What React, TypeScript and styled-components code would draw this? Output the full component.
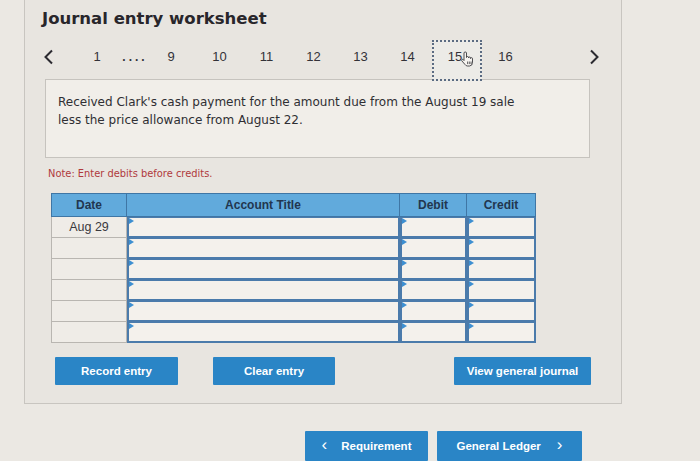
import React from "react";
import styled, { createGlobalStyle } from "styled-components";

const GlobalStyle = createGlobalStyle`
  html, body {
    margin: 0;
    padding: 0;
    background: #ebe8e3;
    width: 700px;
    height: 461px;
    overflow: hidden;
  }
`;

const navItems: { label: string; width: number; gap?: number }[] = [
  { label: "1", width: 34, gap: 22 },
  { label: "....", width: 42 },
  { label: "9", width: 30 },
  { label: "10", width: 47, gap: 10 },
  { label: "11", width: 47 },
  { label: "12", width: 47 },
  { label: "13", width: 47 },
  { label: "14", width: 47 },
];

const ROWS = 6;

const HandCursor: React.FC = () => (
  <svg width="14" height="16" viewBox="0 0 14 16">
    <path
      d="M4 2Q4 1 5.25 1Q6.5 1 6.5 2V6.5Q6.5 5.5 7.5 5.5Q8.5 5.5 8.5 6.5V7Q8.5 6 9.5 6Q10.5 6 10.5 7V7.5Q10.5 6.7 11.5 6.7Q12.5 6.7 12.5 7.7V11Q12.5 15 9.5 15H7.5Q6 15 5 13.5L1.8 9.8Q1.2 9 2 8.5Q2.8 8 3.5 8.8L4 9.5Z"
      fill="#f6f4f0"
      stroke="#3a3a3e"
      strokeWidth="0.9"
      strokeLinejoin="round"
    />
    <path d="M7.6 10.5v2.6M9.3 10.5v2.6M11 10.5v2.6" stroke="#3a3a3e" strokeWidth="0.8" />
  </svg>
);

const Chevron: React.FC<{ dir: "left" | "right" }> = ({ dir }) => (
  <svg width="11" height="16" viewBox="0 0 11 16">
    <polyline
      points={dir === "left" ? "9,1.5 2.5,8 9,14.5" : "2,1.5 8.5,8 2,14.5"}
      fill="none"
      stroke="#2b2a30"
      strokeWidth="2"
    />
  </svg>
);

const App: React.FC = () => {
  return (
    <Page>
      <GlobalStyle />
      <Panel>
        <Title>Journal entry worksheet</Title>
        <Nav>
          <NavArrow>
            <Chevron dir="left" />
          </NavArrow>
          {navItems.map((item) => (
            <NavCell key={item.label} $width={item.width} $gap={item.gap ?? 0}>
              {item.label === "...." ? <Dots>....</Dots> : item.label}
            </NavCell>
          ))}
          <ActivePage>
            <span>15</span>
            <HandCursor />
          </ActivePage>
          <NavCell $width={47} $gap={0}>
            16
          </NavCell>
          <NavArrow $right>
            <Chevron dir="right" />
          </NavArrow>
        </Nav>
        <Description>
          Received Clark's cash payment for the amount due from the August 19 sale
          <br />
          less the price allowance from August 22.
        </Description>
        <Note>Note: Enter debits before credits.</Note>
        <JournalTable>
          <HeadCell>Date</HeadCell>
          <HeadCell>Account Title</HeadCell>
          <HeadCell>Debit</HeadCell>
          <HeadCell>Credit</HeadCell>
          {Array.from({ length: ROWS }).map((_, i) => (
            <React.Fragment key={i}>
              <DateCell>{i === 0 ? "Aug 29" : ""}</DateCell>
              <InputCell />
              <InputCell />
              <InputCell />
            </React.Fragment>
          ))}
        </JournalTable>
        <Actions>
          <ActionButton $width={123}>Record entry</ActionButton>
          <ActionButton $width={122}>Clear entry</ActionButton>
          <Spacer />
          <ActionButton $width={137}>View general journal</ActionButton>
        </Actions>
      </Panel>
      <Footer>
        <ActionButton $width={123} $height={30}>
          <ButtonChevron>‹</ButtonChevron>Requirement
        </ActionButton>
        <ActionButton $width={145} $height={30}>
          General Ledger<ButtonChevron $after>›</ButtonChevron>
        </ActionButton>
      </Footer>
    </Page>
  );
};
export default App;

const Page = styled.div`
  width: 700px;
  height: 461px;
  display: flex;
  flex-direction: column;
  font-family: "Liberation Sans", Arial, sans-serif;
  color: #2f2e33;
`;
const Panel = styled.div`
  margin-left: 24px;
  width: 598px;
  height: 405px;
  box-sizing: border-box;
  border: 1px solid #c8c5c0;
  border-top: none;
  background: #e8e5e0;
  padding-top: 9px;
  display: flex;
  flex-direction: column;
`;
const Title = styled.h1`
  margin: 0 0 0 17px;
  height: 20px;
  line-height: 20px;
  font-family: "DejaVu Sans", Verdana, sans-serif;
  font-size: 16.5px;
  font-weight: bold;
  color: #28262b;
`;
const Nav = styled.div`
  display: flex;
  align-items: flex-start;
  height: 40px;
  margin-top: 11px;
  padding: 0 17px 0 13px;
  font-size: 13px;
  color: #333238;
`;
const NavArrow = styled.div<{ $right?: boolean }>`
  width: 20px;
  height: 16px;
  display: flex;
  justify-content: center;
  margin-top: 9px;
  margin-left: ${(p) => (p.$right ? "auto" : "0")};
`;
const NavCell = styled.div<{ $width: number; $gap: number }>`
  width: ${(p) => p.$width}px;
  margin-left: ${(p) => p.$gap}px;
  margin-top: 9px;
  line-height: 15px;
  text-align: center;
`;
const Dots = styled.span`
  font-weight: bold;
  letter-spacing: 3px;
  font-size: 12px;
`;
const ActivePage = styled.div`
  width: 50px;
  height: 41px;
  margin-left: 1px;
  box-sizing: border-box;
  border: 2px dotted #5b6b82;
  background: #ecebe7;
  display: flex;
  align-items: flex-start;
  justify-content: center;
  padding: 7px 0 0 8px;
  position: relative;
  z-index: 1;
  span {
    line-height: 15px;
  }
  svg {
    margin-top: 2px;
    margin-left: -2px;
  }
`;
const Description = styled.div`
  margin: -1px 0 0 20px;
  width: 545px;
  height: 79px;
  box-sizing: border-box;
  border: 1px solid #c6c3be;
  background: #f1eee9;
  padding: 13px 12px;
  font-family: "DejaVu Sans", Verdana, sans-serif;
  font-size: 12px;
  line-height: 18px;
  color: #2f2e33;
`;
const Note = styled.div`
  margin: 9px 0 0 23px;
  height: 14px;
  line-height: 14px;
  font-family: "DejaVu Sans", Verdana, sans-serif;
  font-size: 9.9px;
  color: #b0393c;
`;
const JournalTable = styled.div`
  margin: 12px 0 0 26px;
  width: 485px;
  display: grid;
  grid-template-columns: 76px 273px 67px 69px;
  grid-template-rows: 24px;
  grid-auto-rows: 21px;
`;
const HeadCell = styled.div`
  background: #61aadc;
  border: 1px solid #3f76a5;
  border-left: none;
  &:first-child {
    border-left: 1px solid #3f76a5;
  }
  display: flex;
  align-items: center;
  justify-content: center;
  font-size: 12px;
  font-weight: bold;
  color: #22364f;
`;
const DateCell = styled.div`
  background: #efece7;
  border: 1px solid #b9b6b1;
  border-top: none;
  display: flex;
  align-items: center;
  justify-content: center;
  font-size: 12.5px;
  color: #3a393e;
`;
const InputCell = styled.div`
  position: relative;
  background: #f4f1ec;
  border: 2px solid #4b7bab;
  border-top-width: 1px;
  &::before {
    content: "";
    position: absolute;
    left: 0;
    top: 0;
    border-top: 3px solid transparent;
    border-bottom: 3px solid transparent;
    border-left: 5px solid #3d8fd1;
  }
`;
const Actions = styled.div`
  display: flex;
  margin: 14px 0 0 30px;
  padding-right: 30px;
  gap: 35px;
`;
const Spacer = styled.div`
  flex: 1;
`;
const ActionButton = styled.button<{ $width: number; $height?: number }>`
  width: ${(p) => p.$width}px;
  height: ${(p) => p.$height ?? 28}px;
  border: none;
  border-radius: 1px;
  background: #2a85c6;
  color: #ffffff;
  font-family: "Liberation Sans", Arial, sans-serif;
  font-size: 11.5px;
  font-weight: bold;
  display: flex;
  align-items: center;
  justify-content: center;
  padding: 0;
  cursor: pointer;
`;
const ButtonChevron = styled.span<{ $after?: boolean }>`
  font-size: 17px;
  font-weight: normal;
  line-height: 14px;
  margin-top: -2px;
  ${(p) => (p.$after ? "margin-left: 16px;" : "margin-right: 14px;")}
`;
const Footer = styled.div`
  display: flex;
  gap: 9px;
  margin: 27px 0 0 305px;
`;
